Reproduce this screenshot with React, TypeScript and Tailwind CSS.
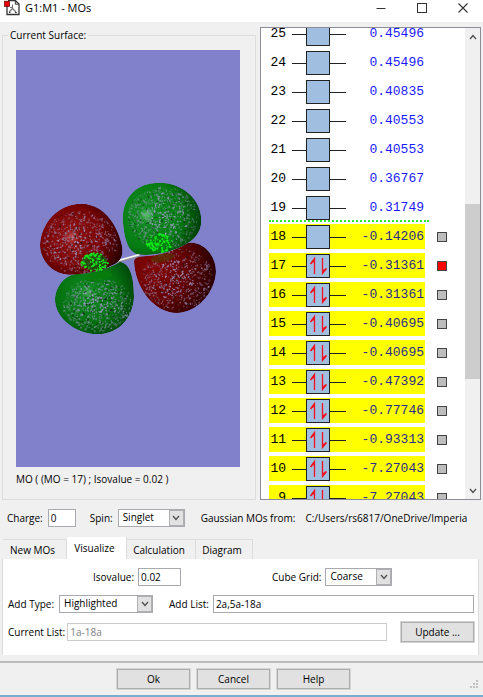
import { useState } from "react";
import type { ReactNode } from "react";

type Orbital = { id: number; energy: string };

const orbitals: Orbital[] = [
  { id: 25, energy: "0.45496" },
  { id: 24, energy: "0.45496" },
  { id: 23, energy: "0.40835" },
  { id: 22, energy: "0.40553" },
  { id: 21, energy: "0.40553" },
  { id: 20, energy: "0.36767" },
  { id: 19, energy: "0.31749" },
  { id: 18, energy: "-0.14206" },
  { id: 17, energy: "-0.31361" },
  { id: 16, energy: "-0.31361" },
  { id: 15, energy: "-0.40695" },
  { id: 14, energy: "-0.40695" },
  { id: 13, energy: "-0.47392" },
  { id: 12, energy: "-0.77746" },
  { id: 11, energy: "-0.93313" },
  { id: 10, energy: "-7.27043" },
  { id: 9, energy: "-7.27043" },
];

const HOMO = 17;
const LAST_LISTED = 18;

const lobes = [
  {
    id: "green-bottom",
    d: "M165 415C168 380 190 350 225 342C270 340 330 325 360 305C390 310 402 350 402 410C400 470 360 522 290 523C220 520 163 470 165 415Z",
    fill: "url(#greenB)", cx: 292, cy: 434, rx: 104, ry: 80, seed: 1187,
  },
  {
    id: "red-left",
    d: "M120 255C122 190 175 130 245 131C315 132 355 200 367 262C370 290 362 300 345 312C310 332 250 345 205 344C155 342 120 300 120 255Z",
    fill: "url(#redL)", cx: 240, cy: 248, rx: 112, ry: 94, seed: 2371,
  },
  {
    id: "red-right",
    d: "M402 305C402 290 420 288 450 287C500 282 540 262 565 248C610 245 648 285 648 335C645 400 590 458 530 459C460 458 405 380 402 305Z",
    fill: "url(#redR)", cx: 532, cy: 358, rx: 108, ry: 92, seed: 3719,
  },
  {
    id: "green-top",
    d: "M368 175C370 110 410 68 478 68C550 68 604 120 604 180C604 225 575 245 540 262C500 282 450 288 412 283C385 275 372 240 368 175Z",
    fill: "url(#greenT)", cx: 490, cy: 174, rx: 106, ry: 92, seed: 5179,
  },
];

// small repeatable generator, so the mesh looks the same on every render
function speckles(cx: number, cy: number, rx: number, ry: number, count: number, seed: number) {
  let s = seed;
  const next = () => {
    s = (s * 16807) % 2147483647;
    return s / 2147483647;
  };
  for (let i = 0; i < 8; i++) next();
  return Array.from({ length: count }, () => {
    const a = next() * Math.PI * 2;
    const r = Math.sqrt(next());
    return {
      x: cx + Math.cos(a) * r * rx,
      y: cy + Math.sin(a) * r * ry,
      size: 1.2 + next() * 1.3,
      turn: next() * 180,
      shade: (0.4 + next() * 0.6) * (1.1 - r * 0.55),
    };
  });
}

function Surface() {
  return (
    <svg className="block h-full w-full" viewBox="48 -330 672 1251" role="img" aria-label="MO 17">
      <defs>
        <radialGradient id="redL" gradientUnits="userSpaceOnUse" cx="215" cy="232" r="160">
          <stop offset="0" stopColor="#c25050" />
          <stop offset="0.14" stopColor="#8e1212" />
          <stop offset="0.55" stopColor="#790404" />
          <stop offset="1" stopColor="#270000" />
        </radialGradient>
        <radialGradient id="redR" gradientUnits="userSpaceOnUse" cx="460" cy="325" r="200">
          <stop offset="0" stopColor="#860808" />
          <stop offset="0.5" stopColor="#640202" />
          <stop offset="1" stopColor="#220000" />
        </radialGradient>
        <radialGradient id="greenT" gradientUnits="userSpaceOnUse" cx="440" cy="165" r="180">
          <stop offset="0" stopColor="#58c068" />
          <stop offset="0.14" stopColor="#108a20" />
          <stop offset="0.55" stopColor="#067c12" />
          <stop offset="1" stopColor="#003006" />
        </radialGradient>
        <radialGradient id="greenB" gradientUnits="userSpaceOnUse" cx="264" cy="398" r="170">
          <stop offset="0" stopColor="#40a850" />
          <stop offset="0.14" stopColor="#0c861c" />
          <stop offset="0.55" stopColor="#057010" />
          <stop offset="1" stopColor="#003006" />
        </radialGradient>
        {lobes.map((l) => (
          <clipPath id={`clip-${l.id}`} key={l.id}>
            <path d={l.d} />
          </clipPath>
        ))}
      </defs>

      <path d="M345 306L418 286" stroke="#8c8c94" strokeWidth="9" />
      <path d="M345 304L418 284" stroke="#f2f2f2" strokeWidth="5" />

      {lobes.map((l) => (
        <g key={l.id} clipPath={`url(#clip-${l.id})`}>
          <path d={l.d} fill={l.fill} />
          {speckles(l.cx, l.cy, l.rx, l.ry, 720, l.seed).map((p, i) => (
            <ellipse
              key={i}
              cx={p.x}
              cy={p.y}
              rx={p.size * 1.5}
              ry={p.size * 0.9}
              transform={`rotate(${p.turn} ${p.x} ${p.y})`}
              fill={i % 6 === 0 ? "#181818" : "#a09acc"}
              opacity={p.shade}
            />
          ))}
        </g>
      ))}

      {/* patches where one lobe shows through the other */}
      <ellipse cx="295" cy="350" rx="42" ry="13" fill="#077d0b" opacity="0.8" transform="rotate(-10 295 350)" />
      <ellipse cx="488" cy="294" rx="36" ry="12" fill="#5b2c00" opacity="0.8" transform="rotate(-10 488 294)" />
      <ellipse cx="283" cy="305" rx="38" ry="25" fill="#0a6508" opacity="0.7" />
      <ellipse cx="478" cy="250" rx="37" ry="26" fill="#047a0c" opacity="0.8" />
      {[...speckles(283, 306, 41, 27, 85, 7177), ...speckles(478, 250, 39, 29, 85, 8311)].map((p, i) => (
        <circle key={i} cx={p.x} cy={p.y} r={p.size * 1.4} fill="#12f01c" />
      ))}
    </svg>
  );
}

function AppIcon() {
  return (
    <svg className="h-4 w-4 shrink-0" viewBox="0 0 16 16" aria-hidden="true">
      <path d="M4 .7h7.5L15 4v10.5H3V4" fill="#fff" stroke="#333" strokeWidth="1.3" />
      <path d="M11.3 1v3.2h3.4" fill="none" stroke="#333" />
      <path d="M8.5 4.5v4.2M8.5 8.5L5.2 12M8.5 8.5l3.5 3.5M6 7.5h2" fill="none" stroke="#777" strokeWidth="1.2" />
      <path d="M5 12.5h1.5M11 12.5h1.8" stroke="#333" />
      <rect x="0.4" y="1.2" width="5.2" height="5.2" fill="#e80000" stroke="#600" strokeWidth="0.7" />
    </svg>
  );
}

function Chevron({ up = false }: { up?: boolean }) {
  return (
    <svg className="h-2 w-2" viewBox="0 0 8 8" aria-hidden="true">
      <path d={up ? "M1 6l3-3.5L7 6" : "M1 2l3 3.5L7 2"} fill="none" stroke="#505050" strokeWidth="1.3" />
    </svg>
  );
}

function OccupationBox({ paired }: { paired: boolean }) {
  return (
    <svg className="h-6 w-[54px] shrink-0" viewBox="0 0 54 24" aria-hidden="true">
      <path d="M0 12.5h54" stroke="#222" />
      <rect x="14.5" y="0.5" width="23" height="23" fill="#a0bfe0" stroke="#222" />
      {paired && (
        <g fill="none" stroke="#f01020" strokeWidth="1.3">
          <path d="M22.5 20V4.5L18.5 10" />
          <path d="M30.5 4v15.5l4-5" />
          <path d="M22.5 4.5L19 9.5l3.5-2zM30.5 19.5l3.5-5-3.5 2z" fill="#f01020" strokeWidth="0.6" />
        </g>
      )}
    </svg>
  );
}

function Select({ id, options, width }: { id: string; options: string[]; width: string }) {
  return (
    <div className={`relative h-[18px] shrink-0 ${width}`}>
      <select id={id} className="block h-full w-full appearance-none border border-[#a9a9b0] bg-white pb-0.5 pl-1 leading-[14px]">
        {options.map((o) => (
          <option key={o}>{o}</option>
        ))}
      </select>
      <span className="pointer-events-none absolute inset-y-px right-px flex w-[15px] items-center justify-center border border-[#b0b0b0] bg-[#e1e1e1]">
        <Chevron />
      </span>
    </div>
  );
}

function PushButton({ children }: { children: ReactNode }) {
  return (
    <button className="h-5 w-[73px] shrink-0 border border-[#adadad] bg-[#e1e1e1] text-center leading-none outline outline-[#d4d4d4]">
      {children}
    </button>
  );
}

function OrbitalList() {
  const [shown, setShown] = useState<number>(17)

  return (
    <div className="flex w-[221px] shrink-0 overflow-hidden border border-[#8b8e99] bg-white">
      <ul className="-mt-[9px] min-w-0 flex-1 pl-2 font-['Liberation_Mono',monospace] text-[13px] leading-4">
        {orbitals.map((o) => {
          const listed = o.id <= LAST_LISTED;
          return (
            <li key={o.id}>
              {o.id === LAST_LISTED && <div className="-mt-0.5 w-40 border-t-2 border-dotted border-[#30e830]" />}
              <div className="flex h-[29px] items-center">
                <div className={`flex h-[25px] w-[156px] items-center pr-px ${listed ? "bg-[#ffff00]" : ""}`}>
                  <span className="w-[23px] pr-1.5 text-right text-black">
                    {o.id}
                  </span>
                  <OccupationBox paired={o.id <= HOMO} />
                  <span className={`flex-1 text-right ${listed ? "text-[#2a2a90]" : "text-[#1a1aff]"}`}>{o.energy}</span>
                </div>
                {listed && (
                  <input
                    type="checkbox"
                    aria-label={`Show MO ${o.id}`}
                    checked={shown === o.id}
                    onChange={() => setShown(o.id)}
                    className="ml-3 h-2.5 w-2.5 appearance-none border border-[#444] bg-[#bdbdbd] checked:bg-[#ff0000]"
                  />
                )}
              </div>
            </li>
          );
        })}
      </ul>
      <div className="flex w-[15px] flex-col bg-[#f0f0f0]">
        <button aria-label="Scroll up" className="flex h-[18px] items-center justify-center"><Chevron up /></button>
        <div className="flex-[158]" />
        <div className="flex-[174] bg-[#cdcdcd]" />
        <div className="flex-[104]" />
        <button aria-label="Scroll down" className="flex h-4 items-center justify-center"><Chevron /></button>
      </div>
    </div>
  );
}

const tabs = [
  { name: "New MOs", width: "w-16" },
  { name: "Visualize", width: "w-[60px]" },
  { name: "Calculation", width: "w-[69px]" },
  { name: "Diagram", width: "w-[57px]" },
];

export default function App() {
  const [tab, setTab] = useState("Visualize")

  return (
    <div className="flex h-screen min-h-[480px] flex-col overflow-hidden bg-[#f0f0f0] font-['Open_Sans',sans-serif] text-[10px] leading-4 text-black">

      {/* title bar */}
      <header className="flex h-[22px] shrink-0 items-center bg-white pb-1.5 pl-1">
        <AppIcon />
        <h1 className="ml-[5px] flex-1 text-[11px]">G1:M1 - MOs</h1>
        <div className="flex">
          <button aria-label="Minimize" className="flex w-[41px] justify-center">
            <svg className="h-3 w-3" viewBox="0 0 12 12"><path d="M1.5 6.5h9" stroke="#333" /></svg>
          </button>
          <button aria-label="Maximize" className="flex w-[41px] justify-center">
            <svg className="h-3 w-3" viewBox="0 0 12 12"><rect x="1.5" y="1.5" width="9" height="9" fill="none" stroke="#333" /></svg>
          </button>
          <button aria-label="Close" className="flex w-[41px] justify-center">
            <svg className="h-3 w-3" viewBox="0 0 12 12"><path d="M1.5 1.5l9 9M10.5 1.5l-9 9" stroke="#333" strokeWidth="1.1" /></svg>
          </button>
        </div>
      </header>

      {/* surface and orbital list */}
      <main className="flex min-h-0 flex-1 gap-1 pt-[5px] pr-0.5 pl-0.5">
        <fieldset className="flex min-w-0 flex-1 flex-col border border-[#dcdcdc] pr-[15px] pl-[13px]">
          <legend className="-ml-2 px-0.5">Current Surface:</legend>
          <div className="mt-[7px] min-h-0 flex-1 bg-[#8080cb]">
            <Surface />
          </div>
          <p className="pt-1 pb-3">MO ( (MO = 17) ; Isovalue = 0.02 )</p>
        </fieldset>
        <OrbitalList />
      </main>

      {/* molecule settings */}
      <div className="flex h-[37px] shrink-0 items-center overflow-hidden pb-0.5 pl-[7px] whitespace-nowrap">
        <label htmlFor="charge" className="mr-[5px]">Charge:</label>
        <input id="charge" defaultValue="0" className="mr-3.5 h-[18px] w-7 border border-[#a9a9b0] bg-white px-0.5" />
        <label htmlFor="spin" className="mr-[5px]">Spin:</label>
        <Select id="spin" options={["Singlet", "Triplet"]} width="w-[67px]" />
        <span className="ml-4">Gaussian MOs from:</span>
        <span className="ml-2.5">C:/Users/rs6817/OneDrive/Imperia</span>
      </div>

      <div className="flex shrink-0 items-end pl-[3px]" role="tablist">
        {tabs.map((t) => (
          <button
            key={t.name}
            role="tab"
            aria-selected={tab === t.name}
            onClick={() => setTab(t.name)}
            className={`${t.width} border-r border-[#dcdcdc] pr-1 text-center ${tab === t.name ? "h-[22px] bg-white" : "h-5 border-t"}`}
          >
            {t.name}
          </button>
        ))}
      </div>

      {/* visualize panel */}
      <section className="mr-1 ml-0.5 flex shrink-0 flex-col gap-[9px] border-x border-[#dcdcdc] bg-white pt-[9px] pr-1 pb-[13px] pl-[5px]">
        <div className="flex items-center pl-[85px]">
          <label htmlFor="isovalue" className="mr-1">Isovalue:</label>
          <input id="isovalue" defaultValue="0.02" className="mr-[91px] h-[18px] w-[43px] border border-[#a9a9b0] px-0.5" />
          <label htmlFor="cube" className="mr-1">Cube Grid:</label>
          <Select id="cube" options={["Coarse", "Medium", "Fine"]} width="w-[67px]" />
        </div>
        <div className="flex items-center">
          <label htmlFor="type" className="mr-[5px]">Add Type:</label>
          <Select id="type" options={["Highlighted", "All"]} width="w-[94px]" />
          <label htmlFor="list" className="mr-1 ml-4">Add List:</label>
          <input id="list" defaultValue="2a,5a-18a" className="h-[18px] min-w-0 flex-1 border border-[#a9a9b0] px-0.5" />
        </div>
        <div className="flex items-center">
          <label htmlFor="current" className="mr-0.5">Current List:</label>
          <input id="current" defaultValue="1a-18a" disabled className="mr-3.5 h-[18px] min-w-0 flex-1 border border-[#cccccc] px-0.5 text-[#808080]" />
          <PushButton>Update ...</PushButton>
        </div>
      </section>

      {/* dialog buttons */}
      <footer className="mt-1.5 flex h-[34px] shrink-0 items-start justify-center gap-[7px] border-t-2 border-[#bcbcbc] pt-1.5 pr-4 pl-0">
        <PushButton>Ok</PushButton>
        <PushButton>Cancel</PushButton>
        <PushButton>Help</PushButton>
      </footer>
      <div className="relative h-0.5 shrink-0 bg-[#78add0]">
        <svg className="absolute right-1 bottom-2 h-2.5 w-2.5" viewBox="0 0 10 10" aria-hidden="true">
          <path d="M7 1h2v2H7zM4 4h2v2H4zM7 4h2v2H7zM1 7h2v2H1zM4 7h2v2H4zM7 7h2v2H7z" fill="#c2c2c2" />
        </svg>
      </div>
    </div>
  );
}
